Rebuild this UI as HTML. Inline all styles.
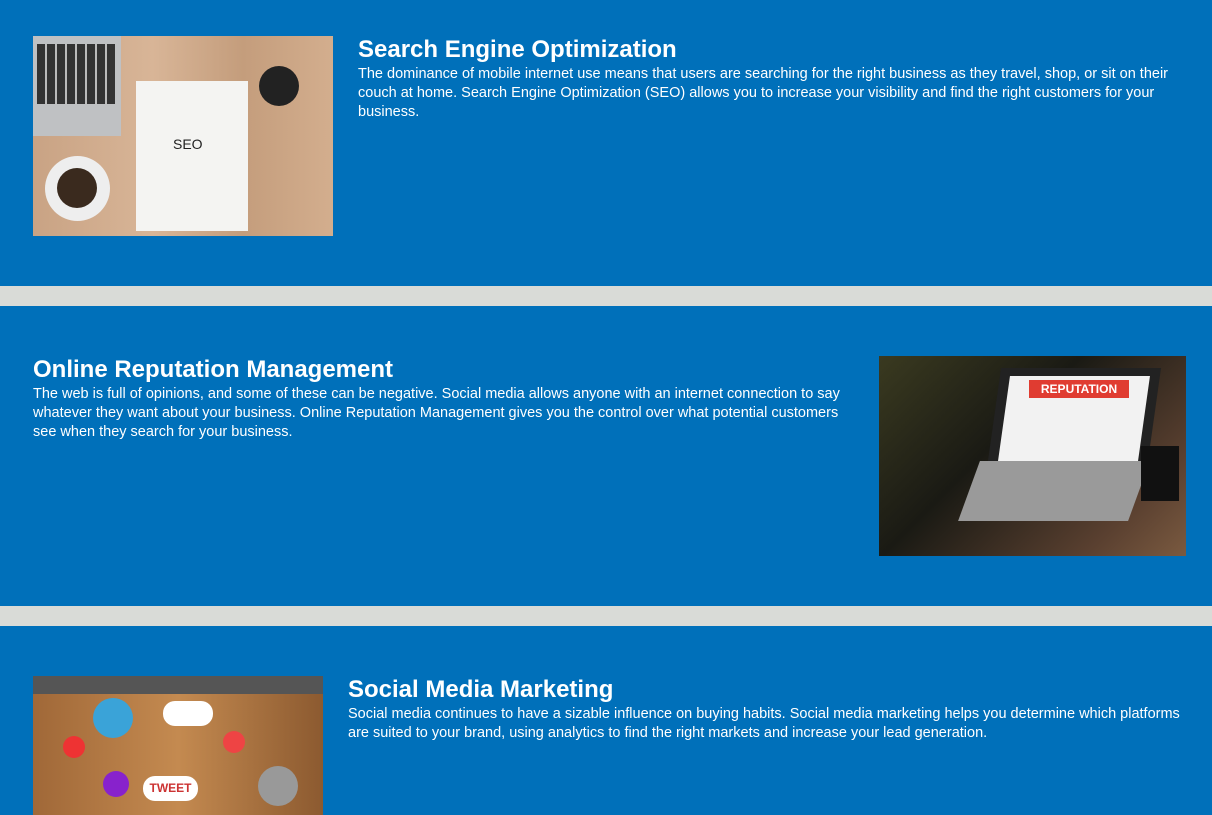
<!DOCTYPE html>
<html><head><meta charset="utf-8"><style>
*{margin:0;padding:0;box-sizing:border-box}
body{width:1212px;height:815px;overflow:hidden;background:#0070ba;font-family:"Liberation Sans",sans-serif;color:#fff;position:relative}
.sep{position:absolute;left:0;width:1212px;height:20px;background:#d9dbd7}
.h{position:absolute;font-weight:bold;font-size:24px;white-space:nowrap}
.p{position:absolute;font-size:14.5px;line-height:19px;white-space:nowrap;letter-spacing:0}
.img{position:absolute;overflow:hidden}
</style></head><body>
<div class="img" style="left:33px;top:36px;width:300px;height:200px;background:linear-gradient(90deg,#c9a384,#d8b597 40%,#c49d7c 70%,#d3ae8e)">
 <div style="position:absolute;left:0;top:0;width:88px;height:100px;background:#bfc1c3"></div>
 <div style="position:absolute;left:4px;top:8px;width:78px;height:60px;background:repeating-linear-gradient(90deg,#333 0 8px,#bbb 8px 10px)"></div>
 <div style="position:absolute;left:103px;top:45px;width:112px;height:150px;background:#f4f4f2"></div>
 <div style="position:absolute;left:12px;top:120px;width:65px;height:65px;border-radius:50%;background:#eee"></div>
 <div style="position:absolute;left:24px;top:132px;width:40px;height:40px;border-radius:50%;background:#3a2a1e"></div>
 <div style="position:absolute;left:226px;top:30px;width:40px;height:40px;border-radius:50%;background:#222"></div>
 <div style="position:absolute;left:140px;top:100px;font-size:14px;color:#222">SEO</div>
</div>
<div class="h" style="left:358px;top:36px">Search Engine Optimization</div>
<div class="p" style="left:358px;top:65px">The dominance of mobile internet use means that users are searching for the right business as they travel, shop, or sit on their<br>couch at home. Search Engine Optimization (SEO) allows you to increase your visibility and find the right customers for your<br>business.</div>
<div class="sep" style="top:286px"></div>
<div class="h" style="left:33px;top:356px">Online Reputation Management</div>
<div class="p" style="left:33px;top:385px">The web is full of opinions, and some of these can be negative. Social media allows anyone with an internet connection to say<br>whatever they want about your business. Online Reputation Management gives you the control over what potential customers<br>see when they search for your business.</div>
<div class="img" style="left:879px;top:356px;width:307px;height:200px;background:linear-gradient(135deg,#3a3a20,#1a1a14 40%,#5a4030 80%,#7a5a40)">
 <div style="position:absolute;left:115px;top:12px;width:160px;height:100px;background:#222;transform:skewX(-8deg)"></div>
 <div style="position:absolute;left:125px;top:20px;width:140px;height:85px;background:#f2f2f2;transform:skewX(-8deg)"></div>
 <div style="position:absolute;left:150px;top:24px;width:100px;height:18px;background:#e03c31;color:#fff;font-size:12px;font-weight:bold;text-align:center;line-height:18px">REPUTATION</div>
 <div style="position:absolute;left:90px;top:105px;width:170px;height:60px;background:#9a9a9a;transform:skewX(-20deg)"></div>
 <div style="position:absolute;left:262px;top:90px;width:38px;height:55px;background:#111"></div>
</div>
<div class="sep" style="top:606px"></div>
<div class="img" style="left:33px;top:676px;width:290px;height:139px;background:linear-gradient(90deg,#a06838,#c48a50 50%,#8c5a30)">
 <div style="position:absolute;left:60px;top:22px;width:40px;height:40px;border-radius:50%;background:#3aa3d8"></div>
 <div style="position:absolute;left:130px;top:25px;width:50px;height:25px;border-radius:12px;background:#fff"></div>
 <div style="position:absolute;left:110px;top:100px;width:55px;height:25px;border-radius:12px;background:#fff;color:#c33;font-weight:bold;font-size:12px;text-align:center;line-height:25px">TWEET</div>
 <div style="position:absolute;left:225px;top:90px;width:40px;height:40px;border-radius:50%;background:#999"></div>
 <div style="position:absolute;left:30px;top:60px;width:22px;height:22px;border-radius:50%;background:#e33"></div>
 <div style="position:absolute;left:190px;top:55px;width:22px;height:22px;border-radius:50%;background:#e44"></div>
 <div style="position:absolute;left:70px;top:95px;width:26px;height:26px;border-radius:50%;background:#82c"></div>
 <div style="position:absolute;left:0;top:0;width:290px;height:18px;background:#555"></div>
</div>
<div class="h" style="left:348px;top:676px">Social Media Marketing</div>
<div class="p" style="left:348px;top:705px">Social media continues to have a sizable influence on buying habits. Social media marketing helps you determine which platforms<br>are suited to your brand, using analytics to find the right markets and increase your lead generation.</div>
</body></html>
